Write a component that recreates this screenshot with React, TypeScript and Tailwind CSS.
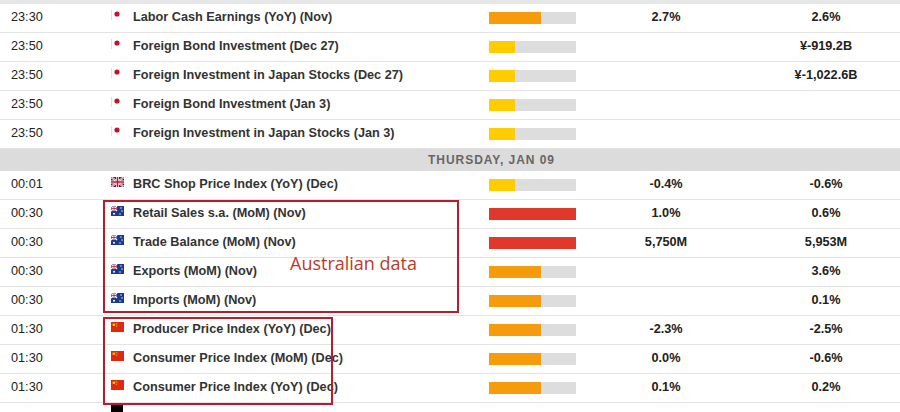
import React from "react";

type Row = { t: string; f: string; n: string; lvl: "o" | "y" | "r"; a?: string; p?: string };

const top: Row[] = [
  { t: "23:30", f: "jp", n: "Labor Cash Earnings (YoY) (Nov)", lvl: "o", a: "2.7%", p: "2.6%" },
  { t: "23:50", f: "jp", n: "Foreign Bond Investment (Dec 27)", lvl: "y", p: "¥-919.2B" },
  { t: "23:50", f: "jp", n: "Foreign Investment in Japan Stocks (Dec 27)", lvl: "y", p: "¥-1,022.6B" },
  { t: "23:50", f: "jp", n: "Foreign Bond Investment (Jan 3)", lvl: "y" },
  { t: "23:50", f: "jp", n: "Foreign Investment in Japan Stocks (Jan 3)", lvl: "y" },
];
const bottom: Row[] = [
  { t: "00:01", f: "gb", n: "BRC Shop Price Index (YoY) (Dec)", lvl: "y", a: "-0.4%", p: "-0.6%" },
  { t: "00:30", f: "au", n: "Retail Sales s.a. (MoM) (Nov)", lvl: "r", a: "1.0%", p: "0.6%" },
  { t: "00:30", f: "au", n: "Trade Balance (MoM) (Nov)", lvl: "r", a: "5,750M", p: "5,953M" },
  { t: "00:30", f: "au", n: "Exports (MoM) (Nov)", lvl: "o", p: "3.6%" },
  { t: "00:30", f: "au", n: "Imports (MoM) (Nov)", lvl: "o", p: "0.1%" },
  { t: "01:30", f: "cn", n: "Producer Price Index (YoY) (Dec)", lvl: "o", a: "-2.3%", p: "-2.5%" },
  { t: "01:30", f: "cn", n: "Consumer Price Index (MoM) (Dec)", lvl: "o", a: "0.0%", p: "-0.6%" },
  { t: "01:30", f: "cn", n: "Consumer Price Index (YoY) (Dec)", lvl: "o", a: "0.1%", p: "0.2%" },
];

function Flag({ f }: { f: string }) {
  if (f === "jp")
    return (
      <svg width="12" height="10" viewBox="0 0 12 10"><rect width="12" height="10" fill="#fff" /><rect x="0" y="0" width="1" height="10" fill="#f3d6d6" /><circle cx="6" cy="4" r="2.6" fill="#c8102e" /></svg>
    );
  if (f === "gb")
    return (
      <svg width="13" height="10" viewBox="0 0 13 10"><rect width="13" height="10" fill="#23356e" /><path d="M0 0L13 10M13 0L0 10" stroke="#fff" strokeWidth="2" /><path d="M0 0L13 10M13 0L0 10" stroke="#c8102e" strokeWidth="0.7" /><path d="M6.5 0V10M0 5H13" stroke="#fff" strokeWidth="3" /><path d="M6.5 0V10M0 5H13" stroke="#c8102e" strokeWidth="1.6" /></svg>
    );
  if (f === "au")
    return (
      <svg width="13" height="10" viewBox="0 0 13 10"><rect width="13" height="10" fill="#1b3a8c" /><path d="M0 0L6 5M6 0L0 5" stroke="#fff" strokeWidth="1.2" /><path d="M3 0V5M0 2.5H6" stroke="#fff" strokeWidth="1.6" /><path d="M3 0V5M0 2.5H6" stroke="#c8102e" strokeWidth="0.8" /><circle cx="3" cy="7.7" r="1" fill="#fff" /><circle cx="10" cy="2" r="0.7" fill="#fff" /><circle cx="11" cy="5" r="0.7" fill="#fff" /><circle cx="9" cy="8" r="0.7" fill="#fff" /></svg>
    );
  return (
    <svg width="13" height="10" viewBox="0 0 13 10"><rect width="13" height="10" fill="#de2910" /><circle cx="2.8" cy="2.8" r="1.3" fill="#ffde00" /><circle cx="5.3" cy="1.3" r="0.5" fill="#ffde00" /><circle cx="6" cy="2.8" r="0.5" fill="#ffde00" /><circle cx="5.3" cy="4.3" r="0.5" fill="#ffde00" /></svg>
  );
}

function Bar({ lvl }: { lvl: string }) {
  return (
    <div className="w-[87px] h-[12px] bg-[#dddddd] flex">
      {lvl === "o" && <div className="w-[52px] h-full bg-[#f59b0c]" />}
      {lvl === "y" && <div className="w-[26px] h-full bg-[#ffcc00]" />}
      {lvl === "r" && <div className="w-full h-full bg-[#e0392b]" />}
    </div>
  );
}

function RowView({ r }: { r: Row }) {
  return (
    <div className="h-[29px] grid grid-cols-[111px_22px_356px_87px_180px_180px] items-center border-b border-[#e3e3e3] text-[12.7px] text-[#222]">
      <div className="pl-[11px]">{r.t}</div>
      <div className="self-start pt-[6px]"><Flag f={r.f} /></div>
      <div className="font-bold text-[#333]">{r.n}</div>
      <Bar lvl={r.lvl} />
      <div className="font-bold text-center">{r.a ?? ""}</div>
      <div className="font-bold text-center whitespace-nowrap pr-[52px] translate-x-[6px]">{r.p ?? ""}</div>
    </div>
  );
}

export default function App() {
  return (
    <div className="w-[900px] h-[412px] overflow-hidden bg-white relative" style={{ fontFamily: '"Liberation Sans", Arial, sans-serif' }}>
      <div className="h-[4px] bg-[#e6e6e6]" />
      {top.map((r, i) => <RowView key={i} r={r} />)}
      <div className="h-[22px] bg-[#dcdcdc] flex items-center pl-[428px] text-[12px] font-bold tracking-[0.08em] text-[#666]">THURSDAY, JAN 09</div>
      {bottom.map((r, i) => <RowView key={i} r={r} />)}
      <div className="h-[10px] pl-[111px]"><div className="w-[12px] h-[8px] bg-black mt-[2px]" /></div>
      <div className="absolute left-[103px] top-[200px] w-[356px] h-[113px] border-2 border-[#c01a2a] pointer-events-none" />
      <div className="absolute left-[103px] top-[317px] w-[230px] h-[88px] border-2 border-[#c01a2a] pointer-events-none" />
      <div className="absolute left-[290px] top-[250px] text-[18px] text-[#c0392b]" style={{ fontFamily: '"Open Sans", sans-serif' }}>Australian data</div>
    </div>
  );
}
